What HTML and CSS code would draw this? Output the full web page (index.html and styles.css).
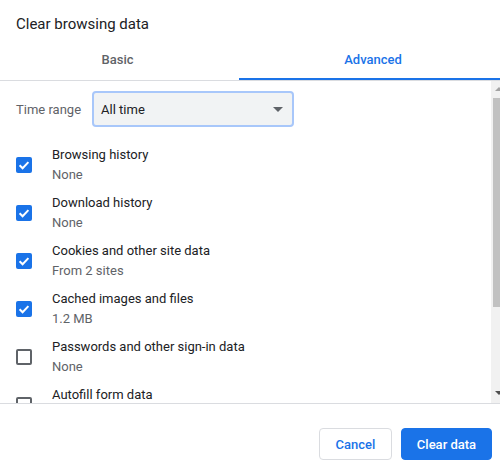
FILE: index.html
```html
<!DOCTYPE html>
<html>
<head>
<meta charset="utf-8">
<link rel="stylesheet" href="styles.css">
</head>
<body>
<div class="dialog">
  <div class="title">Clear browsing data</div>
  <div class="tabs">
    <div class="tab tab-basic">Basic</div>
    <div class="tab tab-active">Advanced</div>
  </div>
  <div class="body">
    <div class="list">
      <div class="time-row">
        <span class="time-label">Time range</span>
        <div class="select">
          <span>All time</span>
          <span class="caret"></span>
        </div>
      </div>
      <div class="row">
        <span class="check on"><svg viewBox="0 0 16 16" width="16" height="16"><path d="M3.6 8.2l3 3 5.8-6.1" fill="none" stroke="#fff" stroke-width="2"/></svg></span>
        <div class="text"><div class="label">Browsing history</div><div class="sub">None</div></div>
      </div>
      <div class="row">
        <span class="check on"><svg viewBox="0 0 16 16" width="16" height="16"><path d="M3.6 8.2l3 3 5.8-6.1" fill="none" stroke="#fff" stroke-width="2"/></svg></span>
        <div class="text"><div class="label">Download history</div><div class="sub">None</div></div>
      </div>
      <div class="row">
        <span class="check on"><svg viewBox="0 0 16 16" width="16" height="16"><path d="M3.6 8.2l3 3 5.8-6.1" fill="none" stroke="#fff" stroke-width="2"/></svg></span>
        <div class="text"><div class="label">Cookies and other site data</div><div class="sub">From 2 sites</div></div>
      </div>
      <div class="row">
        <span class="check on"><svg viewBox="0 0 16 16" width="16" height="16"><path d="M3.6 8.2l3 3 5.8-6.1" fill="none" stroke="#fff" stroke-width="2"/></svg></span>
        <div class="text"><div class="label">Cached images and files</div><div class="sub">1.2 MB</div></div>
      </div>
      <div class="row">
        <span class="check off"></span>
        <div class="text"><div class="label">Passwords and other sign-in data</div><div class="sub">None</div></div>
      </div>
      <div class="row">
        <span class="check off"></span>
        <div class="text"><div class="label">Autofill form data</div><div class="sub">&nbsp;</div></div>
      </div>
    </div>
    <div class="scrollbar">
      <div class="sb-btn sb-up"><span class="tri-up"></span></div>
      <div class="sb-track"><div class="sb-thumb"></div></div>
      <div class="sb-btn sb-down"><span class="tri-down"></span></div>
    </div>
  </div>
  <div class="footer">
    <button class="btn btn-cancel">Cancel</button>
    <button class="btn btn-primary">Clear data</button>
  </div>
</div>
</body>
</html>
```
FILE: styles.css
```css
* { box-sizing: border-box; }
html, body { margin: 0; padding: 0; background: #fff; }
body { font-family: Roboto, "Liberation Sans", sans-serif; color: #202124; overflow: hidden; }

.dialog {
  width: 500px;
  height: 476px;
  display: flex;
  flex-direction: column;
  overflow: hidden;
  background: #fff;
}

.title {
  font-size: 15px;
  line-height: 20px;
  padding: 14px 16px 6px;
  color: #202124;
}

.tabs {
  display: grid;
  grid-template-columns: 239px 1fr;
  border-bottom: 1px solid #dadce0;
}
.tab {
  height: 40px;
  padding-top: 10px;
  font-size: 13px;
  line-height: 20px;
  font-weight: 500;
  text-align: center;
}
.tab-basic { color: #5f6368; padding-right: 4px; }
.tab-active {
  color: #1a73e8;
  padding-left: 7px;
  box-shadow: inset 0 -2px 0 #1a73e8;
}

.body {
  display: flex;
  height: 323px;
  border-bottom: 1px solid #dadce0;
}
.list {
  flex: 1;
  overflow: hidden;
  padding: 10px 0 0 16px;
}

.time-row {
  display: flex;
  align-items: center;
  gap: 11px;
  height: 36px;
  margin-bottom: 18px;
}
.time-label { font-size: 13px; color: #5f6368; }
.select {
  width: 202px;
  height: 36px;
  border: 2px solid #a8c7fa;
  border-radius: 4px;
  background: #f1f3f4;
  display: flex;
  align-items: center;
  justify-content: space-between;
  padding: 0 9px 0 7px;
  font-size: 13px;
  color: #202124;
}
.caret {
  width: 0;
  height: 0;
  border-left: 5px solid transparent;
  border-right: 5px solid transparent;
  border-top: 5px solid #5f6368;
}

.row {
  display: flex;
  align-items: center;
  gap: 20px;
  height: 40px;
  margin-bottom: 8px;
}
.check {
  width: 16px;
  height: 16px;
  border-radius: 2px;
  flex: none;
  display: block;
}
.check svg { display: block; }
.check.on { background: #1a73e8; }
.check.off { border: 2px solid #5f6368; }
.text { font-size: 13px; line-height: 20px; }
.label { color: #202124; }
.sub { color: #5f6368; }

.scrollbar {
  width: 9px;
  flex: none;
  background: #f1f1f1;
  display: flex;
  flex-direction: column;
  overflow: hidden;
}
.sb-btn { height: 15px; flex: none; width: 15px; }
.sb-up { padding: 6px 0 0 4px; }
.sb-down { padding: 3px 0 0 4px; }
.tri-up {
  display: block;
  width: 0; height: 0;
  border-left: 4px solid transparent;
  border-right: 4px solid transparent;
  border-bottom: 4px solid #a3a3a3;
}
.tri-down {
  display: block;
  width: 0; height: 0;
  border-left: 4px solid transparent;
  border-right: 4px solid transparent;
  border-top: 4px solid #505050;
}
.sb-track { flex: 1; padding-top: 2px; }
.sb-thumb {
  margin-left: 2px;
  width: 11px;
  height: 209px;
  background: #c1c1c1;
}

.footer {
  flex: 1;
  display: flex;
  justify-content: flex-end;
  align-items: flex-start;
  gap: 9px;
  padding: 24px 8px 0 0;
}
.btn {
  height: 32px;
  border-radius: 4px;
  font-family: Roboto, "Liberation Sans", sans-serif;
  font-size: 13px;
  font-weight: 500;
  padding: 0;
  white-space: nowrap;
  text-align: center;
  cursor: pointer;
}
.btn-cancel { background: #fff; color: #1a73e8; border: 1px solid #dadce0; width: 73px; }
.btn-primary { background: #1a73e8; color: #fff; border: 1px solid #1a73e8; width: 91px; }
```
